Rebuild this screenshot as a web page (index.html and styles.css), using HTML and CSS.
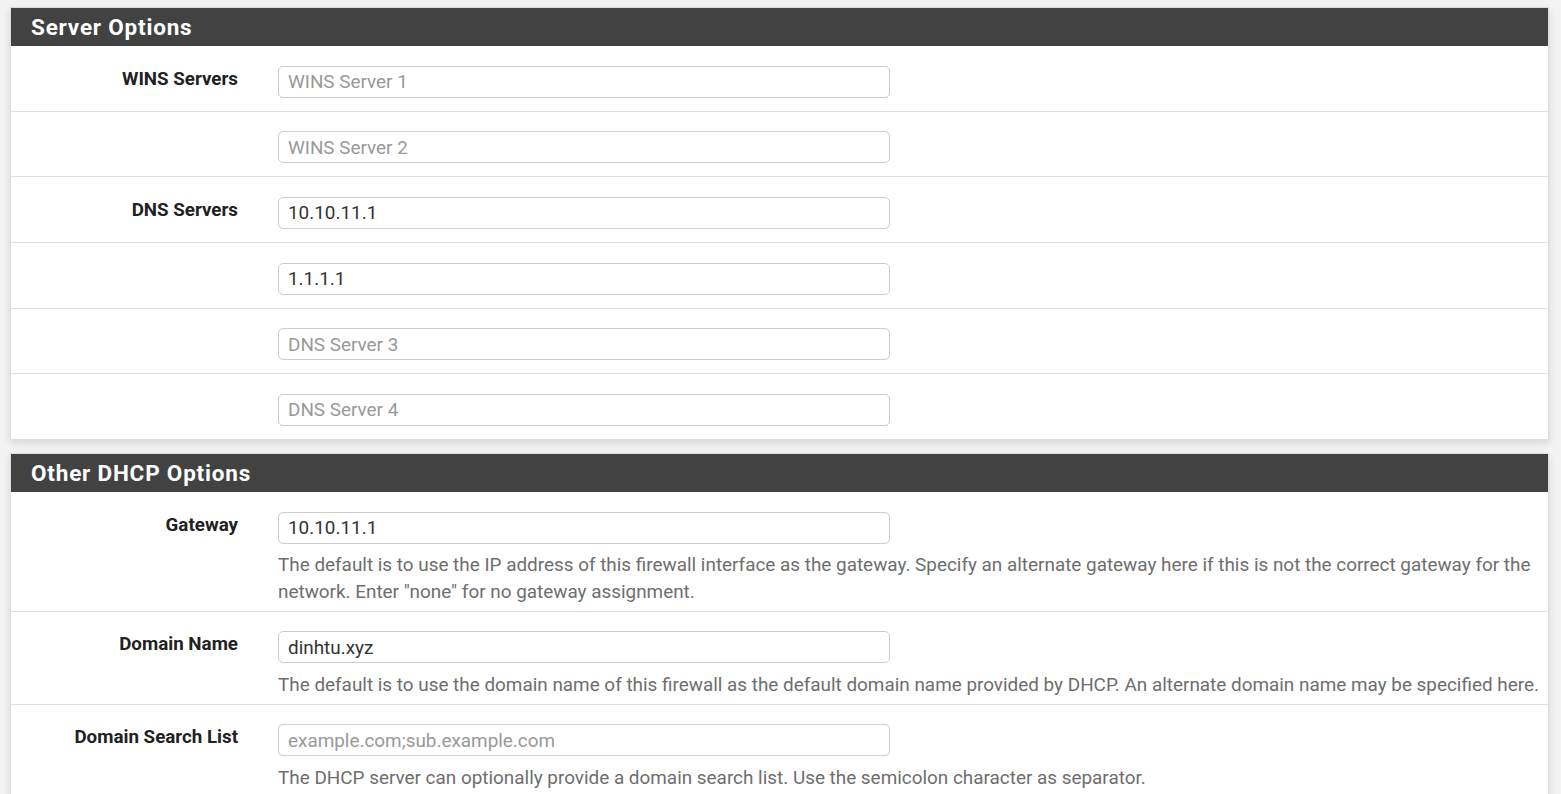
FILE: index.html
```html
<!DOCTYPE html>
<html lang="en">
<head>
<meta charset="utf-8">
<title>DHCP Server Options</title>
<link rel="stylesheet" href="styles.css">
</head>
<body>
<div class="page">
  <section class="panel">
    <div class="panel-heading"><h2 class="panel-title">Server Options</h2></div>
    <div class="panel-body">
      <div class="form-row">
        <label class="form-label">WINS Servers</label>
        <div class="form-field"><input class="form-control" type="text" placeholder="WINS Server 1"></div>
      </div>
      <div class="form-row">
        <span class="form-label"></span>
        <div class="form-field"><input class="form-control" type="text" placeholder="WINS Server 2"></div>
      </div>
      <div class="form-row">
        <label class="form-label">DNS Servers</label>
        <div class="form-field"><input class="form-control" type="text" value="10.10.11.1"></div>
      </div>
      <div class="form-row">
        <span class="form-label"></span>
        <div class="form-field"><input class="form-control" type="text" value="1.1.1.1"></div>
      </div>
      <div class="form-row">
        <span class="form-label"></span>
        <div class="form-field"><input class="form-control" type="text" placeholder="DNS Server 3"></div>
      </div>
      <div class="form-row">
        <span class="form-label"></span>
        <div class="form-field"><input class="form-control" type="text" placeholder="DNS Server 4"></div>
      </div>
    </div>
  </section>

  <section class="panel">
    <div class="panel-heading"><h2 class="panel-title">Other DHCP Options</h2></div>
    <div class="panel-body">
      <div class="form-row with-help">
        <label class="form-label">Gateway</label>
        <div class="form-field">
          <input class="form-control" type="text" value="10.10.11.1">
          <p class="help-block">The default is to use the IP address of this firewall interface as the gateway. Specify an alternate gateway here if this is not the correct gateway for the network. Enter "none" for no gateway assignment.</p>
        </div>
      </div>
      <div class="form-row with-help">
        <label class="form-label">Domain Name</label>
        <div class="form-field">
          <input class="form-control" type="text" value="dinhtu.xyz">
          <p class="help-block">The default is to use the domain name of this firewall as the default domain name provided by DHCP. An alternate domain name may be specified here.</p>
        </div>
      </div>
      <div class="form-row with-help">
        <label class="form-label">Domain Search List</label>
        <div class="form-field">
          <input class="form-control" type="text" placeholder="example.com;sub.example.com">
          <p class="help-block">The DHCP server can optionally provide a domain search list. Use the semicolon character as separator.</p>
        </div>
      </div>
    </div>
  </section>
</div>
</body>
</html>
```

FILE: styles.css
```css
html, body {
  margin: 0;
  padding: 0;
  background: #f3f3f3;
  font-family: Roboto, "Liberation Sans", sans-serif;
  color: #212121;
}

.page {
  padding: 7px 12px 0 10px;
}

.panel {
  background: #ffffff;
  border: 1px solid #dddddd;
  box-shadow: 0 3px 8px rgba(0, 0, 0, 0.12);
  margin-bottom: 13px;
}

.panel-heading {
  background: #424242;
  padding: 6px 20px 6px;
}

.panel-title {
  margin: 0;
  font-size: 22.5px;
  line-height: 26px;
  font-weight: 700;
  color: #ffffff;
  letter-spacing: 0.8px;
}

.form-row {
  display: grid;
  grid-template-columns: 227px 1fr;
  column-gap: 40px;
  padding: 19.5px 8px 13.2px 0;
  border-bottom: 1px solid #e0e0e0;
}

.form-row:last-child {
  border-bottom: none;
}

.form-row.with-help {
  padding-bottom: 5.8px;
}

.form-label {
  display: block;
  text-align: right;
  font-size: 18.75px;
  font-weight: 700;
  line-height: 25px;
  padding-top: 1px;
  color: #212121;
}

.form-field {
  min-width: 0;
}

.form-control {
  display: block;
  box-sizing: border-box;
  width: 612px;
  height: 32px;
  padding: 0 9px;
  border: 1px solid #cccccc;
  border-radius: 5px;
  background: #ffffff;
  font-family: Roboto, "Liberation Sans", sans-serif;
  font-size: 18.9px;
  color: #333333;
  outline: none;
}

.form-control::placeholder {
  color: #999999;
  opacity: 1;
}

.help-block {
  margin: 7.5px 0 0;
  font-size: 18.9px;
  line-height: 27px;
  color: #6e6e6e;
}
```
